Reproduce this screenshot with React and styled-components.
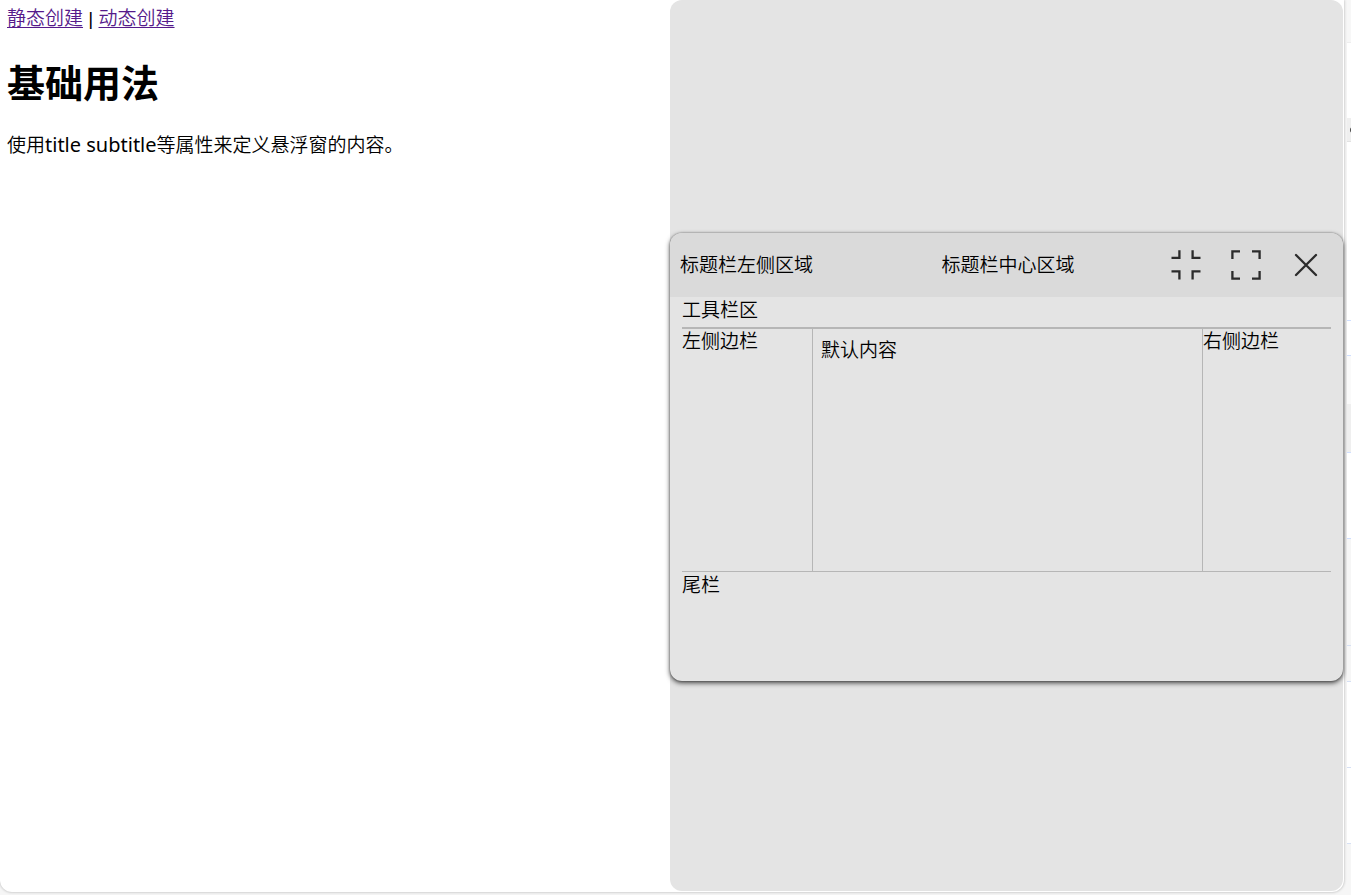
import React from "react";
import styled, { createGlobalStyle } from "styled-components";

const GlobalStyle = createGlobalStyle`
  *, *::before, *::after { box-sizing: border-box; }
  body {
    margin: 0;
    background: #f6f6f6;
    color: #000;
    font: 350 19px/26px "Noto Sans", "Noto Sans CJK SC", sans-serif;
  }
`;

const Page = styled.div`
  display: flex;
  gap: 3px;
  min-height: 100vh;
`;

const Frame = styled.main`
  flex: 1;
  display: grid;
  grid-template-columns: 670fr 673fr;
  margin-bottom: 3px;
  padding-bottom: 1px;
  padding-right: 1px;
  background: #fff;
  border-radius: 0 0 12px 12px;
  box-shadow: 0 0 3px rgba(0, 0, 0, 0.3);
`;

const Article = styled.section`
  padding: 6px 7px;
`;

const Nav = styled.nav`
  font-family: "Liberation Sans", "Noto Sans CJK SC", sans-serif;

  a { color: #551a8b; text-underline-offset: 2px; text-decoration-thickness: 1px; }
`;

const Heading = styled.h1`
  margin: 24px 0;
  font-size: 38px;
  line-height: 52px;
  font-weight: 700;
`;

const Paragraph = styled.p`
  margin: 0;
`;

const Latin = styled.span`
  font-size: 20px;
  font-weight: 400;
`;

const Stage = styled.section`
  padding-top: 233px;
  background: #e4e4e4;
  border-radius: 12px;
`;

const FloatWindow = styled.section`
  display: flex;
  flex-direction: column;
  min-height: 448px;
  overflow: hidden;
  background: #e4e4e4;
  border-radius: 12px;
  box-shadow: 0 2px 5px rgba(0, 0, 0, 0.7), 0 0 2px rgba(0, 0, 0, 0.4);
`;

const TitleBar = styled.header`
  display: grid;
  grid-template-columns: 1fr auto 1fr;
  align-items: center;
  height: 64px;
  padding: 0 7px 0 10px;
  background: #dadada;
`;

const Controls = styled.div`
  display: flex;
  justify-content: flex-end;
`;

const ControlButton = styled.button`
  display: grid;
  place-items: center;
  width: 60px;
  height: 60px;
  padding: 0;
  border: 0;
  background: none;
  color: #2b2b2b;
`;

const WindowBody = styled.div`
  flex: 1;
  display: flex;
  flex-direction: column;
  padding: 0 12px 12px;
`;

const ToolBar = styled.div`
  height: 32px;
  border-bottom: 2px solid #b6b6b6;
`;

const Columns = styled.div`
  display: grid;
  grid-template-columns: 131px 1fr 128px;
  height: 242px;
`;

const Side = styled.aside`
  border-right: ${({ $divided }) => ($divided ? "1px solid #b6b6b6" : "0")};
  line-height: 24px;
`;

const Content = styled.div`
  padding: 8px;
  border-right: 1px solid #b6b6b6;
`;

const Footer = styled.footer`
  border-top: 1px solid #b6b6b6;
`;

const Edge = styled.div`
  display: flex;
  flex-direction: column;
  width: 4px;
  overflow: hidden;
`;

const EdgeRow = styled.div`
  flex: ${({ $height }) => ($height ? `0 0 ${$height}px` : "1")};
  background: ${({ $fill }) => $fill};
  border-bottom: ${({ $line }) => ($line ? `1px solid ${$line}` : "0")};
`;

const EdgeMark = styled.div`
  width: 6px;
  height: 6px;
  margin: 9px 0 0 3px;
  border-radius: 3px;
  background: #444;
`;

const edgeRows = [
  { height: 43, fill: "#f7f7f7", line: "#eeeeee" },
  { height: 75, fill: "#ffffff" },
  { height: 24, fill: "#efefef", line: "#e2e2e2", mark: true },
  { height: 179, fill: "#ffffff", line: "#d0dfff" },
  { height: 35, fill: "#ffffff", line: "#d0dfff" },
  { height: 48, fill: "#fafafa" },
  { height: 49, fill: "#efefef", line: "#d0dfff" },
  { height: 86, fill: "#ffffff", line: "#d0dfff" },
  { height: 107, fill: "#f6f6f6", line: "#d6e0f4" },
  { height: 36, fill: "#f6f6f6", line: "#d6e0f4" },
  { height: 86, fill: "#ffffff", line: "#d6e0f4" },
  { height: 76, fill: "#ffffff", line: "#d6e0f4" },
  { fill: "#f6f6f6" },
];

const iconPaths = {
  shrink: "M1.5 8.8H9.4V1.2M30.5 8.8H22.6V1.2M1.5 22.4H9.4V30.5M30.5 22.4H22.6V30.5",
  expand: "M2.4 10V2.4H10M22 2.4H29.6V10M2.4 22V29.6H10M22 29.6H29.6V22",
  close: "M6 6L26 26M26 6L6 26",
};

function Icon({ name }) {
  return (
    <svg width="32" height="32" viewBox="0 0 32 32" fill="none" stroke="currentColor" strokeWidth="2.3" aria-hidden="true">
      <path d={iconPaths[name]} strokeLinecap={name === "close" ? "round" : "butt"} />
    </svg>
  );
}

export default function App() {
  return (
    <Page>
      <GlobalStyle />
      <Frame>
        <Article>
          <Nav>
            <a href="#static">静态创建</a> | <a href="#dynamic">动态创建</a>
          </Nav>
          <Heading>基础用法</Heading>
          <Paragraph>
            使用<Latin>title subtitle</Latin>等属性来定义悬浮窗的内容。
          </Paragraph>
        </Article>
        <Stage>
          <FloatWindow>
            <TitleBar>
              <span>标题栏左侧区域</span>
              <span>标题栏中心区域</span>
              <Controls>
                <ControlButton type="button" aria-label="还原"><Icon name="shrink" /></ControlButton>
                <ControlButton type="button" aria-label="最大化"><Icon name="expand" /></ControlButton>
                <ControlButton type="button" aria-label="关闭"><Icon name="close" /></ControlButton>
              </Controls>
            </TitleBar>
            <WindowBody>
              <ToolBar>工具栏区</ToolBar>
              <Columns>
                <Side $divided>左侧边栏</Side>
                <Content>默认内容</Content>
                <Side>右侧边栏</Side>
              </Columns>
              <Footer>尾栏</Footer>
            </WindowBody>
          </FloatWindow>
        </Stage>
      </Frame>
      <Edge>
        {edgeRows.map((row, i) => (
          <EdgeRow key={i} $height={row.height} $fill={row.fill} $line={row.line}>
            {row.mark && <EdgeMark />}
          </EdgeRow>
        ))}
      </Edge>
    </Page>
  );
}
